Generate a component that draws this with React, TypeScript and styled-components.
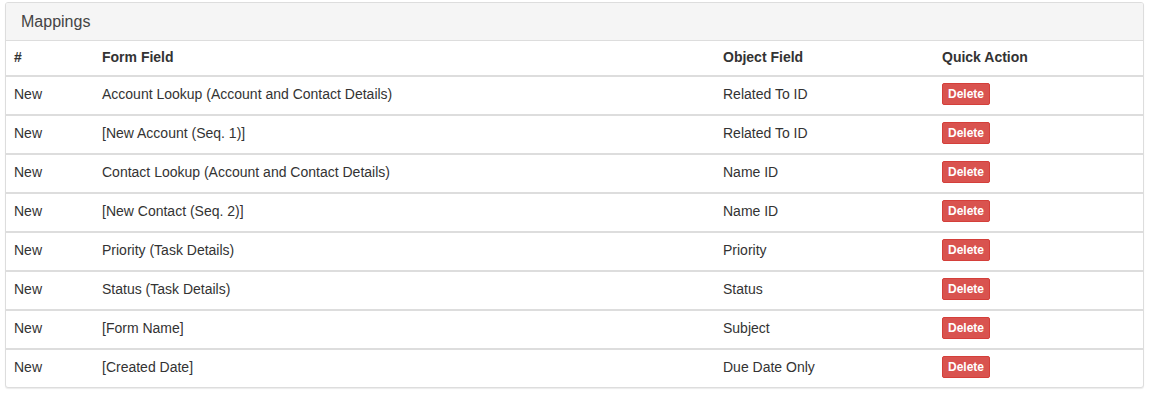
import styled, { createGlobalStyle } from 'styled-components';

type Mapping = {
  id: string;
  formField: string;
  objectField: string;
};

const mappings: Mapping[] = [
  { id: 'New', formField: 'Account Lookup (Account and Contact Details)', objectField: 'Related To ID' },
  { id: 'New', formField: '[New Account (Seq. 1)]', objectField: 'Related To ID' },
  { id: 'New', formField: 'Contact Lookup (Account and Contact Details)', objectField: 'Name ID' },
  { id: 'New', formField: '[New Contact (Seq. 2)]', objectField: 'Name ID' },
  { id: 'New', formField: 'Priority (Task Details)', objectField: 'Priority' },
  { id: 'New', formField: 'Status (Task Details)', objectField: 'Status' },
  { id: 'New', formField: '[Form Name]', objectField: 'Subject' },
  { id: 'New', formField: '[Created Date]', objectField: 'Due Date Only' },
];

const GlobalStyle = createGlobalStyle`
  body {
    margin: 0;
    background: #fff;
    font-family: 'Liberation Sans', Arial, Helvetica, sans-serif;
    color: #333;
  }
`;

function App() {
  return (
    <Page>
      <GlobalStyle />
      <Panel>
        <PanelHeading>Mappings</PanelHeading>
        <Table>
          <colgroup>
            <col style={{ width: 88 }} />
            <col style={{ width: 621 }} />
            <col style={{ width: 219 }} />
            <col />
          </colgroup>
          <thead>
            <tr>
              <HeadCell>#</HeadCell>
              <HeadCell>Form Field</HeadCell>
              <HeadCell>Object Field</HeadCell>
              <HeadCell>Quick Action</HeadCell>
            </tr>
          </thead>
          <tbody>
            {mappings.map((m, i) => (
              <tr key={i}>
                <Cell>{m.id}</Cell>
                <Cell>{m.formField}</Cell>
                <Cell>{m.objectField}</Cell>
                <Cell>
                  <DeleteButton type="button">Delete</DeleteButton>
                </Cell>
              </tr>
            ))}
          </tbody>
        </Table>
      </Panel>
    </Page>
  );
}

const Page = styled.div`
  padding: 2px 5px 6px 5px;
`;

const Panel = styled.div`
  border: 1px solid #ddd;
  border-radius: 3px;
  background: #fff;
  box-shadow: 0 1px 1px rgba(0, 0, 0, 0.08);
  overflow: hidden;
`;

const PanelHeading = styled.div`
  background: #f5f5f5;
  border-bottom: 1px solid #ddd;
  padding: 9px 15px 9px;
  font-size: 16px;
  line-height: 19px;
  color: #444;
`;

const Table = styled.table`
  width: 100%;
  border-collapse: collapse;
  table-layout: fixed;
  font-size: 14px;
`;

const HeadCell = styled.th`
  text-align: left;
  font-weight: bold;
  color: #333;
  padding: 6px 8px 8px;
  height: 34px;
  box-sizing: border-box;
  line-height: 20px;
  border-bottom: 2px solid #ddd;
`;

const Cell = styled.td`
  padding: 0 8px 3px;
  height: 34px;
  line-height: 20px;
  color: #333;
  vertical-align: middle;
  border-top: 2px solid #ddd;

  tr:first-child > & {
    border-top: none;
  }
`;

const DeleteButton = styled.button`
  display: block;
  height: 22px;
  font-family: 'Liberation Sans', Arial, Helvetica, sans-serif;
  font-size: 12px;
  font-weight: bold;
  line-height: 18px;
  padding: 1px 5px;
  color: #fff;
  background: #d9534f;
  border: 1px solid #d43f3a;
  border-radius: 2px;
  cursor: pointer;
`;

export default App;
